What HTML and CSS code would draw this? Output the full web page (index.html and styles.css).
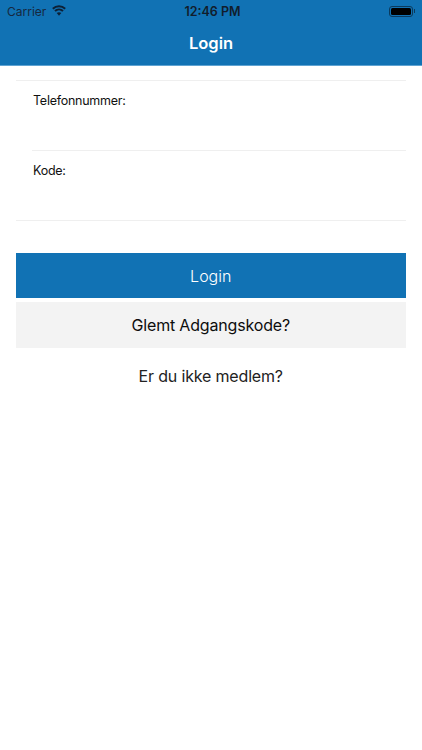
FILE: index.html
```html
<!DOCTYPE html>
<html lang="da">
<head>
<meta charset="utf-8">
<title>Login</title>
<link rel="stylesheet" href="styles.css">
</head>
<body>
<header class="appbar">
  <div class="status">
    <div class="status-left">
      <span>Carrier</span>
      <svg class="wifi" width="14" height="11" viewBox="0 0 14 11"><path d="M.8 3.800C4.300.5 9.700.5 13.200 3.800M3 6.100C5.300 4 8.700 4 11 6.100" fill="none" stroke="#0d2036" stroke-width="2"/><path d="M4.700 8C6 6.900 8 6.900 9.300 8L7 10.700z" fill="#0d2036"/></svg>
    </div>
    <div class="status-time">12:46 PM</div>
    <div class="status-right">
      <div class="battery"><div class="battery-fill"></div></div>
      <div class="battery-tip"></div>
    </div>
  </div>
  <div class="title">Login</div>
</header>
<main class="content">
  <div class="field"><label class="label">Telefonnummer:</label></div>
  <div class="field field-inset"><label class="label">Kode:</label></div>
  <div class="rule"></div>
  <button class="btn btn-primary">Login</button>
  <button class="btn btn-secondary">Glemt Adgangskode?</button>
  <button class="btn btn-link">Er du ikke medlem?</button>
</main>
</body>
</html>
```
FILE: styles.css
```css
* { box-sizing: border-box; }
html, body { margin: 0; padding: 0; height: 100%; background: #fff; overflow: hidden; }
body { font-family: Inter, "Liberation Sans", sans-serif; }

.appbar { height: 66px; background: #1172b4; border-bottom: 1px solid #5fa3d2; }
.status { height: 22px; display: grid; grid-template-columns: 1fr auto 1fr; align-items: center; padding: 0 7px; font-size: 12px; color: #111d2c; }
.status-left { display: flex; align-items: center; gap: 6px; color: #16283f; }
.wifi { display: block; margin-top: -1px; }
.status-time { font-weight: 600; font-size: 12.500px; padding-left: 3px; }
.status-right { display: flex; justify-content: flex-end; align-items: center; }
.battery { width: 24px; height: 11px; border: 1px solid #0b3a5c; border-radius: 3px; padding: 1px; }
.battery-fill { width: 100%; height: 100%; background: #000; border-radius: 1.500px; }
.battery-tip { width: 1px; height: 4px; background: #0b3a5c; margin-left: 1px; }
.title { text-align: center; color: #fff; font-size: 16.500px; font-weight: 600; line-height: 20px; margin-top: 11px; }

.content { padding: 14px 16.500px 0 16px; display: flex; flex-direction: column; }
.field { height: 70px; border-top: 1px solid #efefef; padding: 13px 0 0 17px; }
.field-inset { margin-left: 16px; padding-left: 1px; }
.label { display: block; font-size: 12.500px; line-height: 13px; color: #111; letter-spacing: -.25px; }
.rule { border-top: 1.500px solid #efefef; }

.btn { display: block; width: 100%; border: 0; padding: 0; text-align: center; font-family: inherit; background: none; }
.btn-primary { margin-top: 32px; height: 45px; background: #1172b4; color: #fff; font-weight: 300; font-size: 16px; }
.btn-secondary { margin-top: 4px; height: 46px; background: #f3f3f3; color: #0d0d0d; font-size: 16px; letter-spacing: -.17px; }
.btn-link { height: 56px; color: #222; font-size: 16px; letter-spacing: -.17px; }
```
